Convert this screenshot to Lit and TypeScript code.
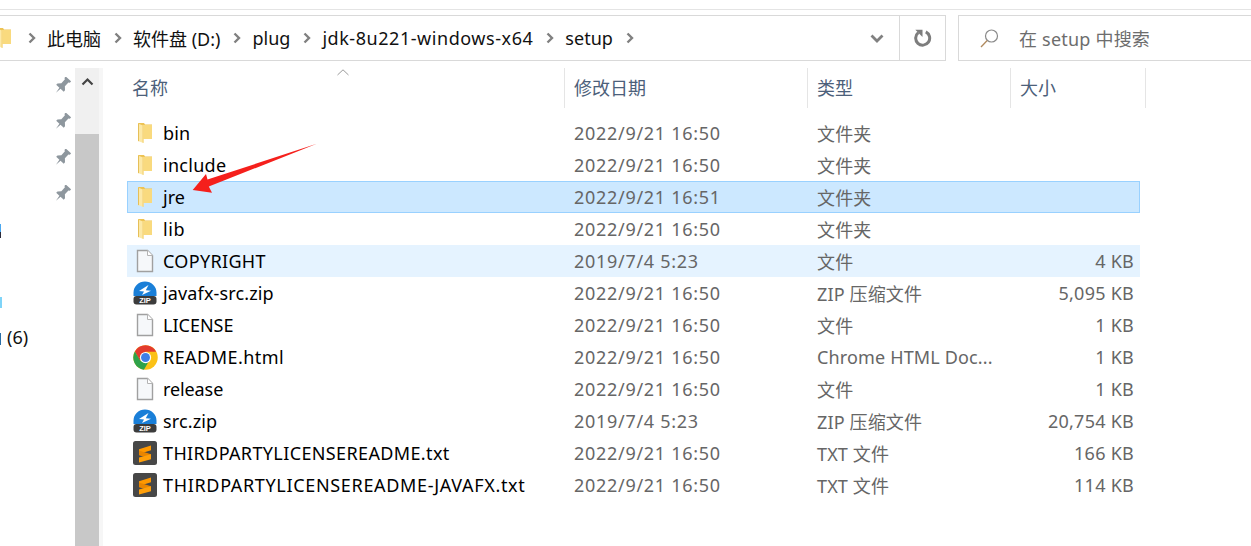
import { LitElement, html, css, svg } from "lit";
import { customElement } from "lit/decorators.js";
import { styleMap } from "lit/directives/style-map.js";

const folder = html`<svg class="fd" width="16" height="22" viewBox="0 0 16 22"><path d="M0 1h6l1 1.500h7V17H0z" fill="#edc354"/><path d="M5 3h9v14H5z" fill="#f9da7e"/><path d="M0 1.500l5.500 2.300V21L0 19z" fill="#fce9a8"/><path d="M0 1.500l1 .4V19.300L0 19z" fill="#e6bf58"/><path d="M4.500 3.400l1 .4V21l-1-.4z" fill="#f3d071"/></svg>`;
const file = html`<svg width="18" height="24" viewBox="0 0 18 24"><path d="M1.500 1.500h10l5 5v16h-15z" fill="#f6f8fa" stroke="#a0a0a0" stroke-width="1.400"/><path d="M11.500 1.500v5h5" fill="#fff" stroke="#b4b4b4"/></svg>`;
const zip = html`<svg width="24" height="24" viewBox="0 0 24 24"><path d="M0.500 15V11.500a11.500 11 0 0 1 23 0V15z" fill="#1a7fd8"/><path d="M15.500 4 12.800 9.200 18 9.800 9 14 11 10.500 6 10z" fill="#fff"/><rect x="0.500" y="15" width="23" height="8.500" rx="3" fill="#3c3c3c"/><text x="12" y="22" text-anchor="middle" font-size="7.500" font-weight="700" fill="#fff" font-family="Liberation Sans">ZIP</text></svg>`;
const chrome = html`<svg width="25" height="25" viewBox="0 0 48 48"><circle cx="24" cy="24" r="23.500" fill="#fbc116"/><path d="M24 .5A23.500 23.500 0 0 0 3.600 12.300L13.500 30 24 13h20.600A23.500 23.500 0 0 0 24 .5z" fill="#e33b2e"/><path d="M3.600 12.300A23.500 23.500 0 0 0 21 47.300L31 30H14z" fill="#2fa24a"/><circle cx="24" cy="24" r="10.800" fill="#fff"/><circle cx="24" cy="24" r="8.600" fill="#3f7fe8"/></svg>`;
const sublime = html`<svg width="24" height="24" viewBox="0 0 24 24"><rect width="24" height="24" rx="2.500" fill="#474747"/><path d="M18 4.500v4.800L6 13V8.300z" fill="#ff9800"/><path d="M6 9.500l12 3.800v4.700L6 14.300z" fill="#e98500"/><path d="M18 13.200v5L6 21.500v-5z" fill="#ff9f0a"/></svg>`;
const pin = html`<svg width="18" height="18" viewBox="0 0 16 16"><path transform="rotate(42 8 8)" d="M4.800 -.5h6.400v1.700l-1.100.6v4.700l2.400 2.500v1.700H8.700L8 16l-.7-5.300H3.500V9l2.400-2.500V1.800l-1.100-.6z" fill="#8e979e"/></svg>`;
const chev = html`<svg class="chev" width="8" height="12" viewBox="0 0 8 12"><path d="M1.500 1.500 6 6l-4.500 4.500" fill="none" stroke="#808080" stroke-width="2.400"/></svg>`;

type Row = [any, string, string, string, string, number, string?];
const rows: Row[] = [
  [folder, "bin", "2022/9/21 16:50", "文件夹", "", 0.2],
  [folder, "include", "2022/9/21 16:50", "文件夹", "", 0.28],
  [folder, "jre", "2022/9/21 16:51", "文件夹", "", 0, "sel"],
  [folder, "lib", "2022/9/21 16:50", "文件夹", "", 0.6],
  [file, "COPYRIGHT", "2019/7/4 5:23", "文件", "4 KB", 0.33, "hov"],
  [zip, "javafx-src.zip", "2022/9/21 16:50", "ZIP 压缩文件", "5,095 KB", 0.14],
  [file, "LICENSE", "2022/9/21 16:50", "文件", "1 KB", 0],
  [chrome, "README.html", "2022/9/21 16:50", "Chrome HTML Doc...", "1 KB", 0.45],
  [file, "release", "2022/9/21 16:50", "文件", "1 KB", -0.1],
  [zip, "src.zip", "2019/7/4 5:23", "ZIP 压缩文件", "20,754 KB", 0.14],
  [sublime, "THIRDPARTYLICENSEREADME.txt", "2022/9/21 16:50", "TXT 文件", "166 KB", 0.37],
  [sublime, "THIRDPARTYLICENSEREADME-JAVAFX.txt", "2022/9/21 16:50", "TXT 文件", "114 KB", 0.67],
];
const segs: [string, number][] = [
  ["此电脑", 0],
  ["软件盘 (D:)", 0],
  ["plug", 0],
  ["jdk-8u221-windows-x64", 0.55],
  ["setup", 0],
];

@customElement("app-root")
export class AppRoot extends LitElement {
  static styles = css`
    :host { display: block; position: relative; width: 1251px; height: 546px; overflow: hidden; background: #fff;
      font-family: "Noto Sans", "Noto Sans CJK SC", sans-serif; font-size: 18px; color: #000; }
    .top { height: 15px; box-sizing: border-box; padding-top: 9px; }
    .topline { height: 1px; background: #e4e4e4; }
    .bar { display: flex; height: 46px; }
    .crumbs { width: 946px; box-sizing: border-box; display: flex; align-items: center; border: 1px solid #d9d9d9; border-width: 1px 1px 1px 0; height: 46px; }
    .path { flex: 1; display: flex; align-items: center; min-width: 0; overflow: hidden; }
    .path .fold { width: 13px; overflow: hidden; display: flex; justify-content: flex-end; margin-right: 15px; }
    .path .fd { margin: 0; flex: none; }
    .seg { margin-right: 13px; white-space: nowrap; color: #111; }
    .seg:first-of-type { margin-left: 1px; }
    .chev { margin-right: 11px; flex: none; }
    .drop { width: 44px; display: flex; justify-content: center; }
    .refresh { width: 45px; height: 44px; border-left: 1px solid #d9d9d9; display: flex; align-items: center; justify-content: center; }
    .search { margin-left: 12px; flex: 1; box-sizing: border-box; border: 1px solid #d9d9d9; border-right: 0; display: flex; align-items: center; padding-left: 21px; gap: 20px; color: #6d6d6d; letter-spacing: .2px; }
    .main { display: flex; height: 485px; }
    .side { width: 75px; position: relative; display: flex; flex-direction: column; align-items: flex-end; padding: 16px 4px 0 0; box-sizing: border-box; gap: 18px; }
    .side svg { flex: none; }
    .count { position: absolute; left: 7px; top: 264px; font-size: 18px; white-space: nowrap; color: #111; }
    .sliver { position: absolute; left: 0; width: 2px; }
    .s1 { top: 163px; height: 14px; width: 1px; background: linear-gradient(#4aa8f0 60%, #2a2a3a 60%); }
    .s2 { top: 236px; height: 11px; background: #7fd4f8; }
    .s3 { top: 272px; height: 12px; width: 1px; background: #2a6fa8; }
    .scroll { width: 24px; margin-top: 7px; background: #f0f0f0; display: flex; flex-direction: column; }
    .up { height: 66px; display: flex; justify-content: center; padding-top: 9px; box-sizing: border-box; }
    .thumb { flex: 1; background: #c8c8c8; }
    .gutter { width: 4px; background: #f6f6f6; margin-top: 7px; }
    .list { flex: 1; position: relative; padding-left: 24px; }
    .head { display: grid; grid-template-columns: 438px 243px 203px 135px; height: 40px; padding-top: 7px; color: #4c607a; font-size: 18px; }
    .head div { border-right: 1px solid #e5e5e5; padding: 0 0 2px 5px; box-sizing: border-box; display: flex; align-items: center; height: 40px; }
    .head div + div { padding-left: 9px; }
    .caret { position: absolute; left: 234px; top: 8px; }
    .rows { margin-top: 9px; width: 1013px; }
    .row { display: grid; grid-template-columns: 36px 411px 243px 1fr 100px; height: 32px; align-items: center; box-sizing: border-box; white-space: nowrap; }
    .row .ic { display: flex; justify-content: center; align-items: center; height: 32px; }
    .row .fd { margin-left: 2px; }
    .row .date, .row .type, .row .size { color: #666; }
    .row .date { letter-spacing: .7px; }
    .row .type { letter-spacing: .15px; padding-bottom: 1px; }
    .row .size { text-align: right; padding-right: 6px; letter-spacing: .25px; }
    .sel { background: #cce8ff; box-shadow: inset 0 0 0 1px #99d1ff; }
    .hov { background: #e5f3ff; }
    .arrow { position: absolute; left: 0; top: 0; pointer-events: none; }
  `;

  render() {
    return html`
      <div class="top"><div class="topline"></div></div>
      <div class="bar">
        <div class="crumbs">
          <div class="path">
            <span class="fold">${folder}</span>
            ${segs.map(
              ([s, ls], i) => html`${i ? "" : chev}<span class="seg" style=${styleMap({ letterSpacing: ls + "px" })}>${s}</span>${chev}`
            )}
          </div>
          <div class="drop"><svg width="14" height="9" viewBox="0 0 14 9"><path d="M1.500 1.500 7 7l5.500-5.500" fill="none" stroke="#808080" stroke-width="2.800"/></svg></div>
          <div class="refresh"><svg width="18" height="18" viewBox="0 0 18 18"><path d="M11.800 2.900A7 7 0 1 1 4.300 3.700" fill="none" stroke="#7d7d7d" stroke-width="3"/><path d="M1.300 .8h7.200v7.200z" fill="#7d7d7d"/></svg></div>
        </div>
        <div class="search">
          <svg width="19" height="19" viewBox="0 0 19 19"><circle cx="11.500" cy="7" r="6" fill="none" stroke="#8a8a8a" stroke-width="1.200"/><path d="M7.200 11.500 1 18" stroke="#b08a5e" stroke-width="1.300"/></svg>
          <span>在 setup 中搜索</span>
        </div>
      </div>
      <div class="main">
        <div class="side">
          ${pin}${pin}${pin}${pin}
          <i class="sliver s1"></i><i class="sliver s2"></i><i class="sliver s3"></i>
          <span class="count">(6)</span>
        </div>
        <div class="scroll">
          <div class="up"><svg width="13" height="9" viewBox="0 0 13 9"><path d="M1.500 7.500 6.500 2.500l5 5" fill="none" stroke="#444" stroke-width="2.200"/></svg></div>
          <div class="thumb"></div>
        </div>
        <div class="gutter"></div>
        <div class="list">
          <svg class="caret" width="12" height="7" viewBox="0 0 12 7"><path d="M.5 6 6 .8 11.500 6" fill="none" stroke="#9a9a9a"/></svg>
          <div class="head"><div>名称</div><div>修改日期</div><div>类型</div><div>大小</div></div>
          <div class="rows">
            ${rows.map(
              (r) => html`<div class="row ${r[6] ?? ""}">
                <span class="ic">${r[0]}</span><span style=${styleMap({ letterSpacing: r[5] + "px" })}>${r[1]}</span>
                <span class="date">${r[2]}</span><span class="type">${r[3]}</span><span class="size">${r[4]}</span>
              </div>`
            )}
          </div>
        </div>
      </div>
      <svg class="arrow" width="1251" height="546" viewBox="0 0 1251 546">
        ${svg`<path d="M316.800 143.800 207.500 179.500 206 174 192.700 190 212 192.800 208.800 186.500z" fill="#f5201c"/>`}
      </svg>
    `;
  }
}
